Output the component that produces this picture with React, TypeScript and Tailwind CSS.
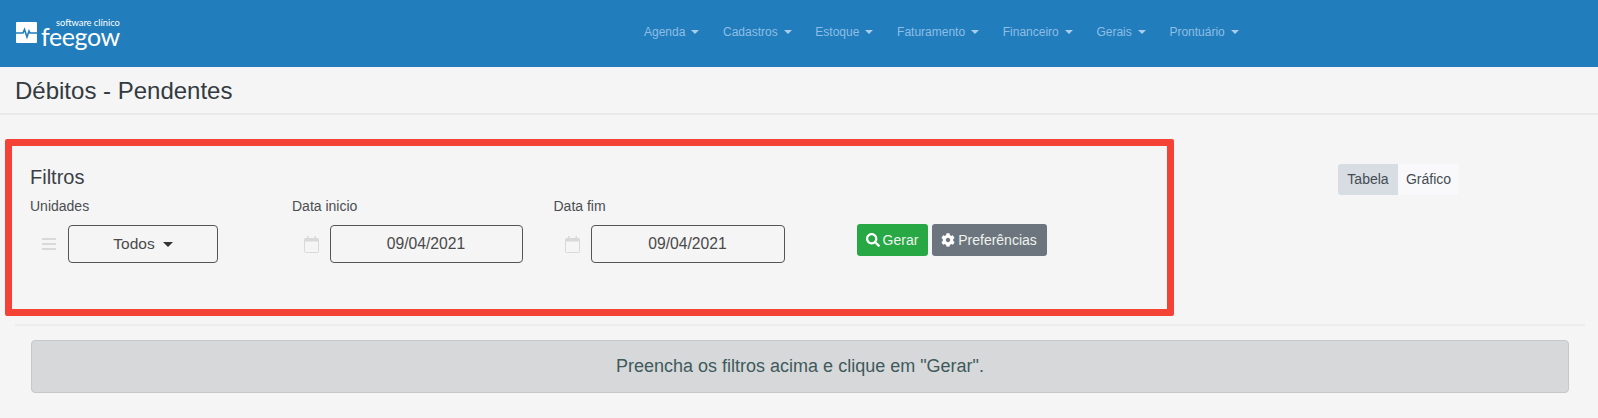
import { FaCog, FaSearch } from 'react-icons/fa';

const navItems = ['Agenda', 'Cadastros', 'Estoque', 'Faturamento', 'Financeiro', 'Gerais', 'Prontuário'];

const Logo = () => (
  <div className="flex items-end gap-[4px] ml-[16px] mt-[17px] w-[104px]">
    <svg width="21" height="21" viewBox="0 0 21 21" className="mb-[4px] shrink-0">
      <rect width="21" height="21" rx="1" fill="#fff" />
      <path d="M0 11h7l1.5-3.5 2.5 7.5 2-6 1 2h7" fill="none" stroke="#217dbb" strokeWidth="1.6" />
    </svg>
    <div className="flex flex-col items-end text-white font-['Lato',sans-serif]">
      <span className="text-[9.3px] leading-[11px] whitespace-nowrap">software clínico</span>
      <span className="text-[25px] leading-[21px] -mt-[2px] tracking-[-0.4px] whitespace-nowrap">feegow</span>
    </div>
  </div>
);

const Header = () => (
  <header className="flex items-start h-[67px] bg-[#217dbb]">
    <Logo />
    <nav className="flex ml-[524px] mt-[24px] gap-[23.65px] text-[12px] leading-[16px] text-[#8fbde6]">
      {navItems.map((item) => (
        <div key={item} className="flex items-center gap-[6px]">
          <span>{item}</span>
          <span className="border-x-[4px] border-t-[4px] border-x-transparent border-t-[#a9cdec]" />
        </div>
      ))}
    </nav>
  </header>
);

const CalendarIcon = () => (
  <svg width="15" height="17" viewBox="0 0 15 17" className="shrink-0">
    <rect x="0.5" y="2.5" width="14" height="14" rx="1" fill="none" stroke="#d9d9d9" />
    <rect x="0.5" y="2.5" width="14" height="3" fill="#d9d9d9" />
    <rect x="3" y="0" width="1.5" height="3" fill="#d9d9d9" />
    <rect x="10.5" y="0" width="1.5" height="3" fill="#d9d9d9" />
  </svg>
);

const BarsIcon = () => (
  <svg width="14" height="14" viewBox="0 0 14 14" className="shrink-0">
    <rect y="1" width="14" height="2" fill="#d9d9d9" />
    <rect y="6" width="14" height="2" fill="#d9d9d9" />
    <rect y="11" width="14" height="2" fill="#d9d9d9" />
  </svg>
);

const FieldLabel = ({ children }: { children: string }) => (
  <div className="text-[14px] leading-[17px] mb-[10px] text-[#4a4e52]">{children}</div>
);

export default function App() {
  return (
    <div className="w-[1598px] h-[418px] overflow-hidden bg-[#f5f5f5] font-['Liberation_Sans',Arial,sans-serif]">
      <Header />

      <div className="flex items-center h-[48px] pl-[15px] pt-[1px] border-b-2 border-[#e8e8e8]">
        <h1 className="text-[24px] text-[#333a40]">Débitos - Pendentes</h1>
      </div>

      <div className="flex items-start mt-[24px]">
        {/* red annotation round the filters */}
        <section className="ml-[5px] w-[1169px] h-[177px] border-[7px] border-[#f44336] rounded-[2px] pl-[18px] pt-[19px]">
          <h2 className="text-[20px] leading-[24px] text-[#3b4045] mb-[9px]">Filtros</h2>
          <div className="flex items-start">
            <div className="w-[262px]">
              <FieldLabel>Unidades</FieldLabel>
              <div className="flex items-center pl-[12px] gap-[12px]">
                <BarsIcon />
                <div className="w-[150px] h-[38px] flex items-center justify-center gap-[8px] border border-[#555] rounded-[4px] text-[15.5px] text-[#4a4a4a]">
                  Todos
                  <span className="border-x-[5px] border-t-[5px] border-x-transparent border-t-[#333]" />
                </div>
              </div>
            </div>
            <div className="w-[261.5px]">
              <FieldLabel>Data inicio</FieldLabel>
              <div className="flex items-center pl-[11.5px] gap-[11px]">
                <CalendarIcon />
                <div className="w-[193px] h-[38px] flex items-center justify-center border border-[#555] rounded-[4px] text-[15.7px] text-[#4a4a4a]">
                  09/04/2021
                </div>
              </div>
            </div>
            <div className="w-[303px]">
              <FieldLabel>Data fim</FieldLabel>
              <div className="flex items-center pl-[11px] gap-[11px]">
                <CalendarIcon />
                <div className="w-[194px] h-[38px] flex items-center justify-center border border-[#555] rounded-[4px] text-[15.7px] text-[#4a4a4a]">
                  09/04/2021
                </div>
              </div>
            </div>
            <div className="flex gap-[4px] mt-[26px] text-[14px] text-[#eef3f0]">
              <button className="flex items-center justify-center gap-[3px] w-[71px] h-[32px] bg-[#28a745] rounded-[3px]">
                <FaSearch className="text-[14px] text-white" />
                Gerar
              </button>
              <button className="flex items-center justify-center gap-[3px] w-[115px] h-[32px] bg-[#6c757d] rounded-[3px]">
                <FaCog className="text-[14px] text-white" />
                Preferências
              </button>
            </div>
          </div>
        </section>

        <div className="flex ml-[164px] mt-[25px] text-[14px] text-[#444b52]">
          <div className="flex items-center justify-center w-[60px] h-[31px] bg-[#d8dde3] rounded-l-[3px]">Tabela</div>
          <div className="flex items-center justify-center w-[61px] h-[31px] bg-[#f9f9fb] rounded-r-[3px]">Gráfico</div>
        </div>
      </div>

      <hr className="ml-[15px] mr-[13px] mt-[8px] border-t-2 border-[#ececec]" />

      <div className="flex items-center justify-center ml-[31px] mt-[14px] w-[1538px] h-[53px] bg-[#d6d8d9] border border-[#c6c8ca] rounded-[4px] text-[18px] text-[#3f5a5c]">
        Preencha os filtros acima e clique em "Gerar".
      </div>
    </div>
  );
}
